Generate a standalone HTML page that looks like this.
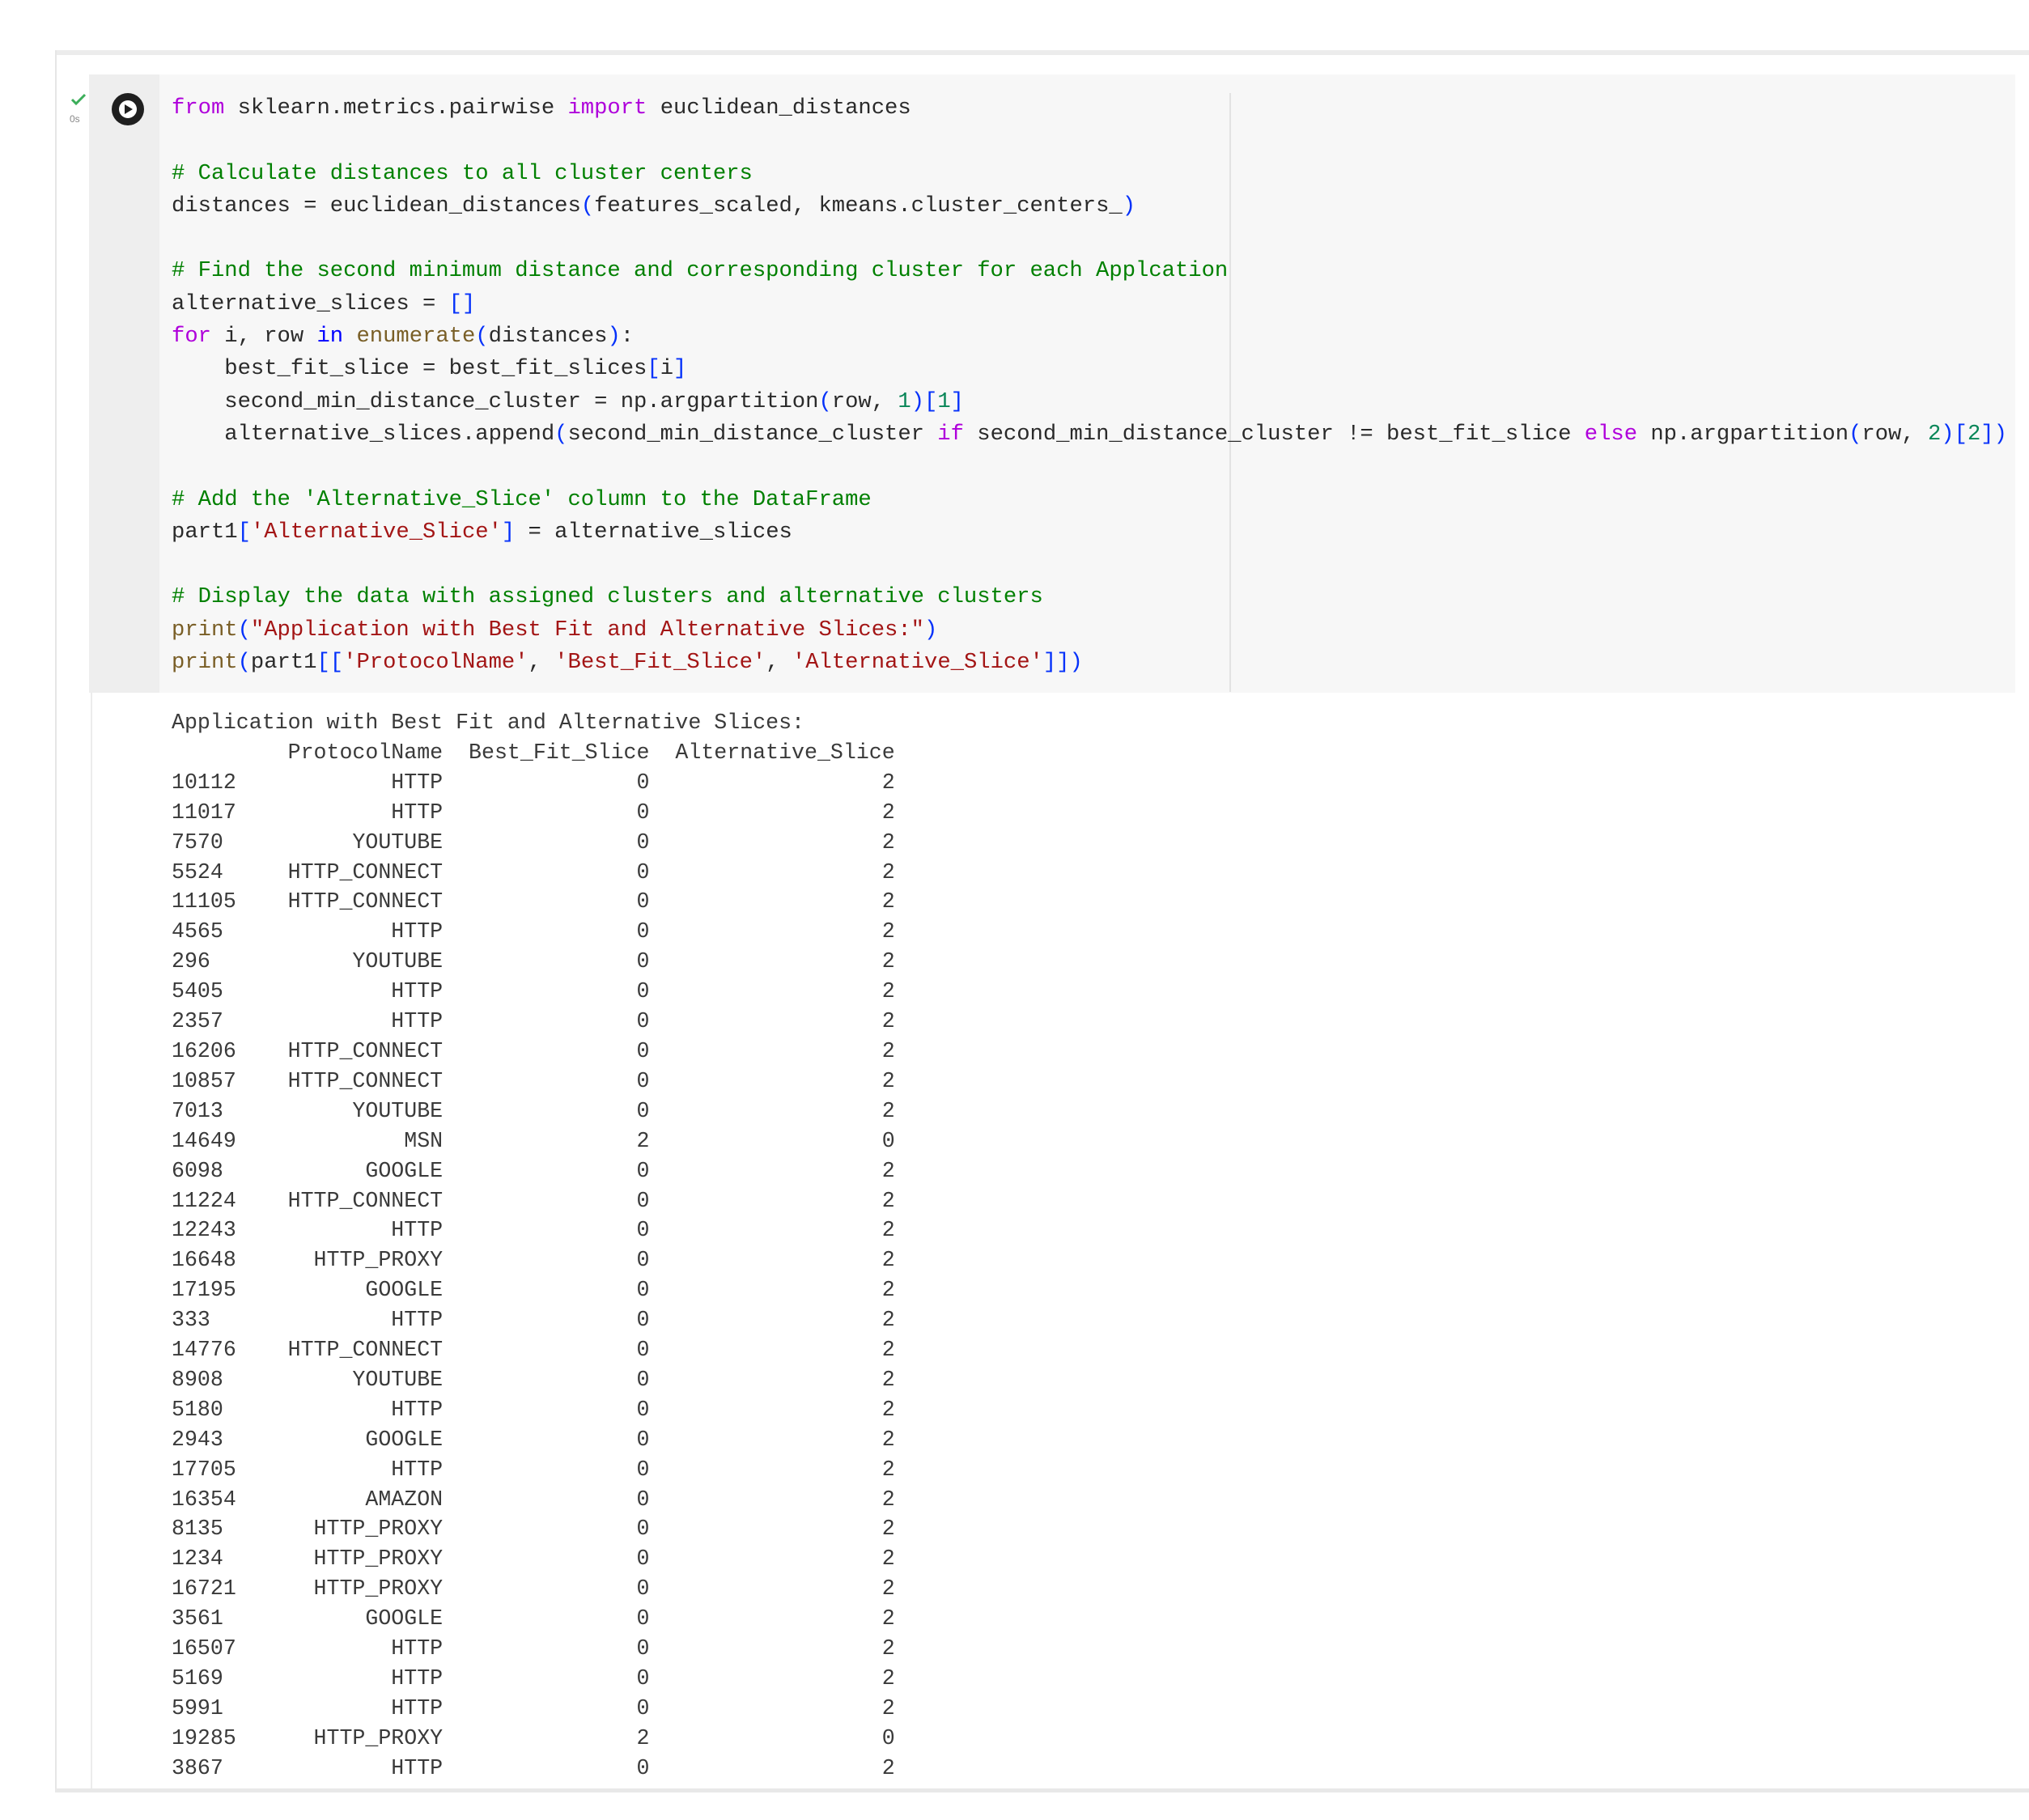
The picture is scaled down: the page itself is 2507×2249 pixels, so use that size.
<!DOCTYPE html>
<html><head><meta charset="utf-8"><style>
html,body{margin:0;padding:0;background:#fff;width:2507px;height:2249px;overflow:hidden;position:relative}
.a{position:absolute}
pre{margin:0;font-family:"Liberation Mono",monospace;white-space:pre}
.code{left:212px;top:114px;font-size:27.2px;line-height:40.3px;color:#2a2a2a}
.k{color:#af00db}.b{color:#0000ff}.c{color:#008000}.s{color:#a31515}.f{color:#795e26}.p{color:#0431fa}.n{color:#098658}
.out{left:212px;top:875px;font-size:26.6px;line-height:36.9px;color:#3a3a3a}
</style></head><body>
<div class="a" style="left:68px;top:62px;width:2439px;height:6px;background:#ececec"></div>
<div class="a" style="left:68px;top:62px;width:2px;height:2152px;background:#e6e6e6"></div>
<div class="a" style="left:110px;top:92px;width:2380px;height:764px;background:#f7f7f7"></div>
<div class="a" style="left:110px;top:92px;width:87px;height:764px;background:#eeeeee"></div>
<div class="a" style="left:112px;top:856px;width:2px;height:1356px;background:#ececec"></div>
<div class="a" style="left:1519px;top:115px;width:2px;height:740px;background:#e2e2e2"></div>
<div class="a" style="left:68px;top:2210px;width:2439px;height:5px;background:#e8e8e8"></div>
<svg class="a" style="left:136px;top:113px" width="44" height="44" viewBox="0 0 44 44"><circle cx="22" cy="22" r="20" fill="#1f1f1f"/><circle cx="22" cy="22" r="11" fill="#fff"/><path d="M18 16 L28 22 L18 28 Z" fill="#1f1f1f"/></svg>
<svg class="a" style="left:86px;top:114px" width="22" height="18"><path d="M3 9 L8 14 L19 3" stroke="#3cae5a" stroke-width="3" fill="none"/></svg>
<div class="a" style="left:86px;top:140px;font:12px 'Liberation Sans',sans-serif;color:#888">0s</div>
<pre class="a code"><span class="k">from</span> sklearn.metrics.pairwise <span class="k">import</span> euclidean_distances

<span class="c"># Calculate distances to all cluster centers</span>
distances = euclidean_distances<span class="p">(</span>features_scaled, kmeans.cluster_centers_<span class="p">)</span>

<span class="c"># Find the second minimum distance and corresponding cluster for each Applcation</span>
alternative_slices = <span class="p">[]</span>
<span class="k">for</span> i, row <span class="b">in</span> <span class="f">enumerate</span><span class="p">(</span>distances<span class="p">)</span>:
    best_fit_slice = best_fit_slices<span class="p">[</span>i<span class="p">]</span>
    second_min_distance_cluster = np.argpartition<span class="p">(</span>row, <span class="n">1</span><span class="p">)[</span><span class="n">1</span><span class="p">]</span>
    alternative_slices.append<span class="p">(</span>second_min_distance_cluster <span class="k">if</span> second_min_distance_cluster != best_fit_slice <span class="k">else</span> np.argpartition<span class="p">(</span>row, <span class="n">2</span><span class="p">)[</span><span class="n">2</span><span class="p">])</span>

<span class="c"># Add the 'Alternative_Slice' column to the DataFrame</span>
part1<span class="p">[</span><span class="s">'Alternative_Slice'</span><span class="p">]</span> = alternative_slices

<span class="c"># Display the data with assigned clusters and alternative clusters</span>
<span class="f">print</span><span class="p">(</span><span class="s">"Application with Best Fit and Alternative Slices:"</span><span class="p">)</span>
<span class="f">print</span><span class="p">(</span>part1<span class="p">[[</span><span class="s">'ProtocolName'</span>, <span class="s">'Best_Fit_Slice'</span>, <span class="s">'Alternative_Slice'</span><span class="p">]])</span></pre>
<pre class="a out">Application with Best Fit and Alternative Slices:
         ProtocolName  Best_Fit_Slice  Alternative_Slice
10112            HTTP               0                  2
11017            HTTP               0                  2
7570          YOUTUBE               0                  2
5524     HTTP_CONNECT               0                  2
11105    HTTP_CONNECT               0                  2
4565             HTTP               0                  2
296           YOUTUBE               0                  2
5405             HTTP               0                  2
2357             HTTP               0                  2
16206    HTTP_CONNECT               0                  2
10857    HTTP_CONNECT               0                  2
7013          YOUTUBE               0                  2
14649             MSN               2                  0
6098           GOOGLE               0                  2
11224    HTTP_CONNECT               0                  2
12243            HTTP               0                  2
16648      HTTP_PROXY               0                  2
17195          GOOGLE               0                  2
333              HTTP               0                  2
14776    HTTP_CONNECT               0                  2
8908          YOUTUBE               0                  2
5180             HTTP               0                  2
2943           GOOGLE               0                  2
17705            HTTP               0                  2
16354          AMAZON               0                  2
8135       HTTP_PROXY               0                  2
1234       HTTP_PROXY               0                  2
16721      HTTP_PROXY               0                  2
3561           GOOGLE               0                  2
16507            HTTP               0                  2
5169             HTTP               0                  2
5991             HTTP               0                  2
19285      HTTP_PROXY               2                  0
3867             HTTP               0                  2</pre>
</body></html>
